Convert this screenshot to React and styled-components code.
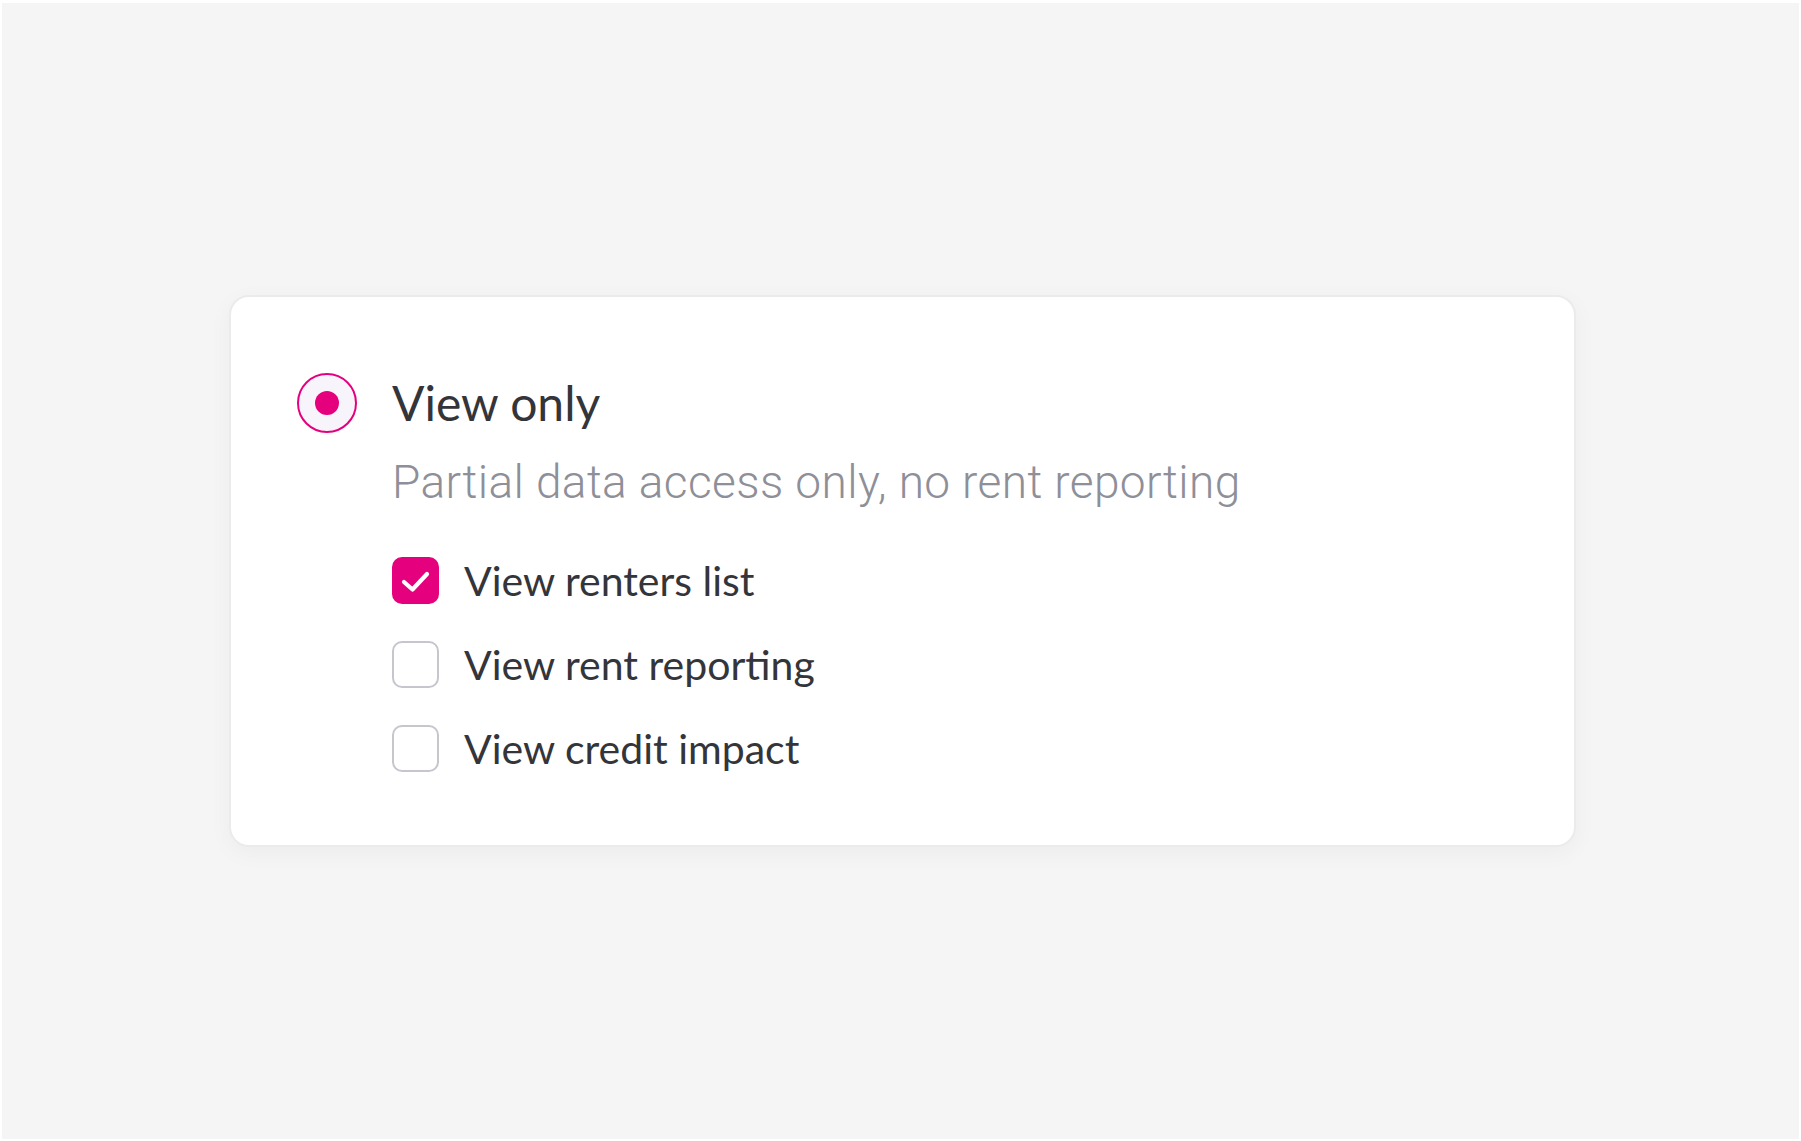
import React, { useState } from "react";
import styled, { createGlobalStyle } from "styled-components";

const GlobalStyle = createGlobalStyle`
  html, body {
    margin: 0;
    padding: 0;
    background: #ffffff;
  }
  * {
    box-sizing: border-box;
  }
`;

const Page = styled.div`
  margin: 3px 2px 2px 2px;
  padding-left: 4px;
  height: 1136px;
  background: #f5f5f5;
  display: flex;
  align-items: center;
  justify-content: center;
  font-family: Lato, "Noto Sans", sans-serif;
`;

const Card = styled.div`
  width: 1347px;
  background: #ffffff;
  border: 2px solid #ebebeb;
  border-radius: 20px;
  box-shadow: 0 6px 24px rgba(0, 0, 0, 0.04);
  padding: 76px 66px 73px 66px;
`;

const OptionRow = styled.div`
  display: flex;
  align-items: center;
  gap: 35px;
`;

const Radio = styled.span`
  width: 60px;
  height: 60px;
  flex: none;
  border-radius: 50%;
  border: 2.5px solid #e5007e;
  background: #f8f4fc;
  display: flex;
  align-items: center;
  justify-content: center;

  &::after {
    content: "";
    width: 24px;
    height: 24px;
    border-radius: 50%;
    background: #e5007e;
    display: ${(p) => (p.$checked ? "block" : "none")};
  }
`;

const Title = styled.div`
  font-size: 48px;
  line-height: 60px;
  color: #34353a;
`;

const Body = styled.div`
  padding-left: 95px;
`;

const Subtitle = styled.div`
  font-family: Roboto, "Liberation Sans", sans-serif;
  font-weight: 300;
  font-size: 46px;
  letter-spacing: 0.4px;
  line-height: 56px;
  color: #8e8f98;
  margin-top: 21px;
`;

const Checks = styled.div`
  display: flex;
  flex-direction: column;
  gap: 37px;
  margin-top: 47px;
`;

const CheckRow = styled.label`
  display: flex;
  align-items: center;
  gap: 25px;
  cursor: pointer;
`;

const Box = styled.span`
  width: 47px;
  height: 47px;
  flex: none;
  border-radius: 10px;
  border: ${(p) => (p.$checked ? "none" : "2.5px solid #c5c6ce")};
  background: ${(p) => (p.$checked ? "#e5007e" : "#ffffff")};
  display: flex;
  align-items: center;
  justify-content: center;
`;

const Label = styled.span`
  font-size: 41px;
  line-height: 47px;
  color: #34353a;
`;

const items = [
  { id: "renters", label: "View renters list", checked: true },
  { id: "reporting", label: "View rent reporting", checked: false },
  { id: "credit", label: "View credit impact", checked: false },
];

export default function App() {
  const [checked, setChecked] = useState(
    Object.fromEntries(items.map((i) => [i.id, i.checked]))
  );

  return (
    <>
      <GlobalStyle />
      <Page>
        <Card>
          <OptionRow>
            <Radio $checked />
            <Title>View only</Title>
          </OptionRow>
          <Body>
            <Subtitle>Partial data access only, no rent reporting</Subtitle>
            <Checks>
              {items.map((item) => (
                <CheckRow
                  key={item.id}
                  onClick={() =>
                    setChecked((c) => ({ ...c, [item.id]: !c[item.id] }))
                  }
                >
                  <Box $checked={checked[item.id]}>
                    {checked[item.id] && (
                      <svg width="47" height="47" viewBox="0 0 47 47">
                        <path
                          d="M12 25 L20.5 32.5 L35 17"
                          fill="none"
                          stroke="#ffffff"
                          strokeWidth="4.2"
                          strokeLinecap="round"
                          strokeLinejoin="round"
                        />
                      </svg>
                    )}
                  </Box>
                  <Label>{item.label}</Label>
                </CheckRow>
              ))}
            </Checks>
          </Body>
        </Card>
      </Page>
    </>
  );
}
